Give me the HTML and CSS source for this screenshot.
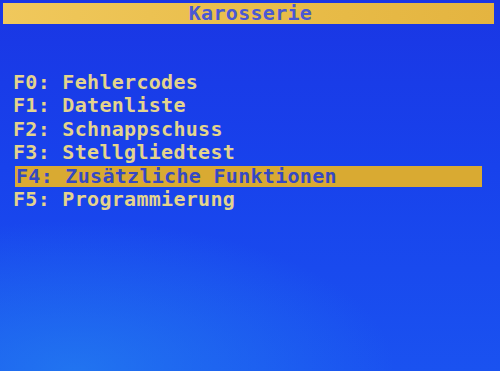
FILE: index.html
```html
<!DOCTYPE html>
<html lang="de">
<head>
<meta charset="utf-8">
<title>Karosserie</title>
<link rel="stylesheet" href="styles.css">
</head>
<body>
<div class="screen">
  <header class="title-bar">Karosserie</header>
  <ul class="menu">
    <li class="item">F0: Fehlercodes</li>
    <li class="item">F1: Datenliste</li>
    <li class="item">F2: Schnappschuss</li>
    <li class="item">F3: Stellgliedtest</li>
    <li class="item selected">F4: Zusätzliche Funktionen</li>
    <li class="item">F5: Programmierung</li>
  </ul>
</div>
</body>
</html>
```

FILE: styles.css
```css
html, body {
  margin: 0;
  padding: 0;
}
body {
  width: 500px;
  height: 371px;
  overflow: hidden;
}
.screen {
  width: 500px;
  height: 371px;
  box-sizing: border-box;
  padding: 3px 6px 0 3px;
  font-family: "DejaVu Sans Mono", "Liberation Mono", monospace;
  font-weight: bold;
  font-size: 20px;
  letter-spacing: 0.3px;
  background:
    radial-gradient(ellipse 320px 150px at 15% 100%, rgba(36, 130, 240, 0.7), rgba(36, 130, 240, 0) 100%),
    linear-gradient(180deg, #1a36e4 0%, #1842ec 45%, #1a52f0 100%);
}
.title-bar {
  height: 21px;
  line-height: 21px;
  text-align: center;
  background: linear-gradient(90deg, #f0c85c 0%, #e8bc48 60%, #e4b440 100%);
  color: #4a58d4;
  padding-left: 4px;
}
.menu {
  list-style: none;
  margin: 47px 0 0 0;
  padding: 0;
}
.item {
  height: 23.4px;
  line-height: 23.4px;
  padding-left: 10px;
  color: #e4d48c;
}
.item.selected {
  margin-left: 12px;
  margin-right: 12px;
  padding-left: 1px;
  height: 21px;
  line-height: 21px;
  margin-top: 1px;
  margin-bottom: 1.4px;
  background: #d9aa32;
  color: #3548c4;
}
```
